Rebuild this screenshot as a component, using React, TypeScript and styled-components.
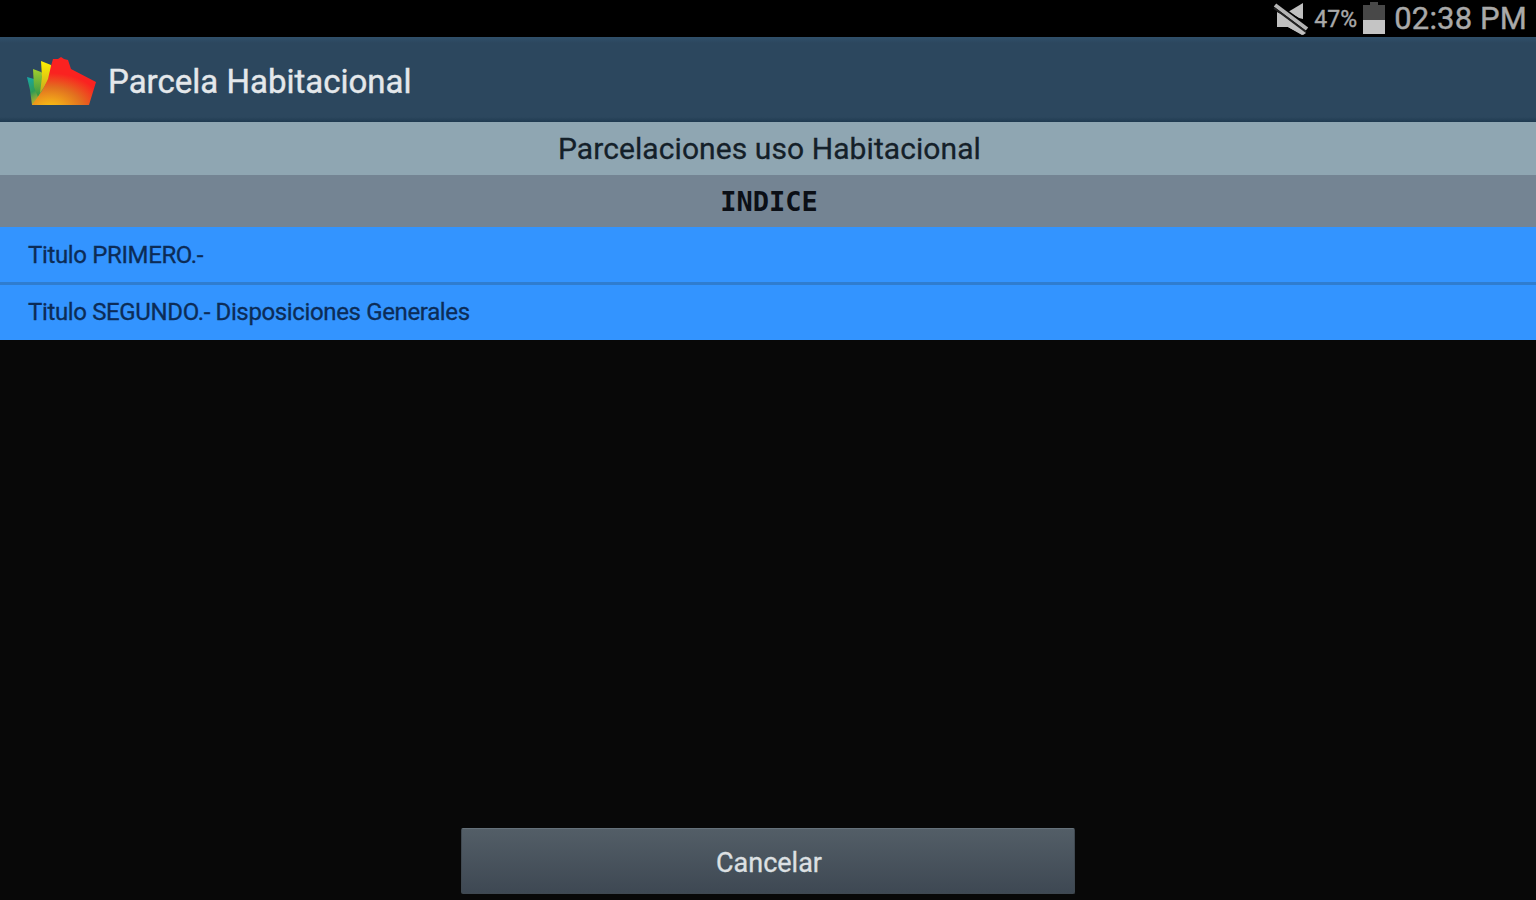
import styled, { createGlobalStyle } from "styled-components";

const GlobalStyle = createGlobalStyle`
  * {
    box-sizing: border-box;
  }
  body {
    margin: 0;
    background-color: #080808;
    font-family: Roboto, "Liberation Sans", sans-serif;
  }
`

const Container = styled.div`
  display: flex;
  flex-direction: column;
  width: 100%;
  height: 100vh;
  overflow: hidden;
  background-color: #080808;
`

const StatusBar = styled.div`
  display: flex;
  justify-content: flex-end;
  align-items: center;
  flex: none;
  height: 37px;
  padding-right: 9px;
  background-color: #000000;
  color: #a9a9a9;
  white-space: nowrap;
  -webkit-text-stroke: 0.4px currentColor;
`
const Percent = styled.span`
  width: 48px;
  margin-left: 5px;
  padding-top: 1px;
  font-size: 23px;
`
const Clock = styled.span`
  margin-left: 8px;
  font-size: 31px;
  line-height: 36px;
  letter-spacing: 0.15px;
`

const Header = styled.header`
  display: flex;
  align-items: center;
  flex: none;
  height: 85px;
  padding: 0 0 0 24px;
  background: linear-gradient(#30506a 0, #2c475e 6px, #2c475e 80px, #1f3a50 85px);
`
const Title = styled.h1`
  margin: 4px 0 0 10px;
  font-size: 33px;
  font-weight: 400;
  line-height: 40px;
  color: #e4e8eb;
  -webkit-text-stroke: 0.4px currentColor;
`

const Subtitle = styled.h2`
  flex: none;
  height: 53px;
  margin: 0;
  padding-left: 3px;
  background-color: #8fa6b2;
  color: #142029;
  font-size: 30px;
  font-weight: 400;
  line-height: 54px;
  letter-spacing: 0.08px;
  text-align: center;
  -webkit-text-stroke: 0.3px currentColor;
`
const IndexTitle = styled.h3`
  flex: none;
  height: 52px;
  margin: 0;
  padding-left: 2px;
  background-color: #748493;
  color: #0b0f16;
  font-family: "DejaVu Sans Mono", monospace;
  font-size: 27px;
  font-weight: 700;
  line-height: 53px;
  text-align: center;
`

const List = styled.ul`
  flex: 1;
  margin: 0;
  padding: 0;
  list-style: none;
`
const Item = styled.li`
  height: 55px;
  padding-left: 28px;
  background-color: #3394ff;
  color: #0c2c57;
  font-size: 24px;
  line-height: 56px;
  letter-spacing: -0.36px;
  -webkit-text-stroke: 0.3px currentColor;
  & + & {
    height: 58px;
    border-top: 3px solid #2f7dd0;
    line-height: 54px;
  }
`

const Footer = styled.footer`
  display: flex;
  justify-content: center;
  flex: none;
  padding-bottom: 6px;
`
const Button = styled.button`
  width: 614px;
  height: 66px;
  padding: 4px 0 0 2px;
  border: 1px solid #3f4850;
  border-top-color: #65717a;
  border-radius: 2px;
  background: linear-gradient(#535e67, #3e4853);
  color: #dde0e3;
  font-family: inherit;
  font-size: 27px;
  -webkit-text-stroke: 0.3px currentColor;
`

function MuteIcon() {
  return (
    <svg width="36" height="36" viewBox="0 0 36 36">
      <path d="M15 11L30 2V18L26 17Z" fill="#c0c0c0" />
      <path d="M4 12L8 12L33 32L30 34L15 26H4Z" fill="#c0c0c0" />
      <path d="M2 5L34 28" stroke="#000" strokeWidth="8" />
      <path d="M2 4L34 28" stroke="#b4b4b4" strokeWidth="4" />
      <path d="M4 11V26H15L29 34L33 31L8 13Z" fill="#c0c0c0" />
      <path d="M1 7L33 31" stroke="#222" strokeWidth="1.6" />
    </svg>
  )
}

function BatteryIcon() {
  return (
    <svg width="24" height="36" viewBox="0 0 24 36">
      <path d="M8 1H16V4H23V19H1V4H8Z" fill="#484848" />
      <rect x="1" y="19" width="22" height="14" fill="#c4c4c4" />
    </svg>
  )
}

function Logo() {
  return (
    <svg width="74" height="60" viewBox="0 -7 74 60">
      <defs>
        <radialGradient id="fire" gradientUnits="userSpaceOnUse" cx="0" cy="0" r="1" gradientTransform="translate(26 52) scale(54 36)">
          <stop offset="0" stopColor="#fcc60e" />
          <stop offset="0.25" stopColor="#f0a41a" />
          <stop offset="0.6" stopColor="#e2701f" />
          <stop offset="1" stopColor="#fa2220" />
        </radialGradient>
        <linearGradient id="leaf" x1="0" y1="0" x2="0.4" y2="1">
          <stop offset="0" stopColor="#16a8ac" />
          <stop offset="0.55" stopColor="#2f9b55" />
          <stop offset="1" stopColor="#d3b221" />
        </linearGradient>
        <linearGradient id="lime" x1="0" y1="0" x2="0" y2="1">
          <stop offset="0" stopColor="#a2cf2c" />
          <stop offset="1" stopColor="#2f9348" />
        </linearGradient>
        <linearGradient id="yellow" x1="0" y1="0" x2="0" y2="1">
          <stop offset="0" stopColor="#fff200" />
          <stop offset="1" stopColor="#c5a521" />
        </linearGradient>
      </defs>
      <path d="M3 20L10 22L22 30L14 48H8L6 33Z" fill="url(#leaf)" />
      <path d="M9 12L17 15L24 21L14 40L10 30Z" fill="url(#lime)" />
      <path d="M17 4L27 8V20L16 36L18 20Z" fill="url(#yellow)" />
      <path d="M27 9L29 2L34 2L37 0L40 2L44 3L47 12L72 25L65 48H8L18 34L24 22Z" fill="url(#fire)" />
    </svg>
  )
}

const items = ["Titulo PRIMERO.-", "Titulo SEGUNDO.- Disposiciones Generales"];

function App() {
  return (
    <>
      <GlobalStyle />
      <Container>
        <StatusBar>
          <MuteIcon />
          <Percent>47%</Percent>
          <BatteryIcon />
          <Clock>02:38 PM</Clock>
        </StatusBar>
        <Header>
          <Logo />
          <Title>Parcela Habitacional</Title>
        </Header>
        <Subtitle>Parcelaciones uso Habitacional</Subtitle>
        <IndexTitle>INDICE</IndexTitle>
        <List>
          {items.map(item => <Item key={item}>{item}</Item>)}
        </List>
        <Footer>
          <Button>Cancelar</Button>
        </Footer>
      </Container>
    </>
  )
}

export default App;
